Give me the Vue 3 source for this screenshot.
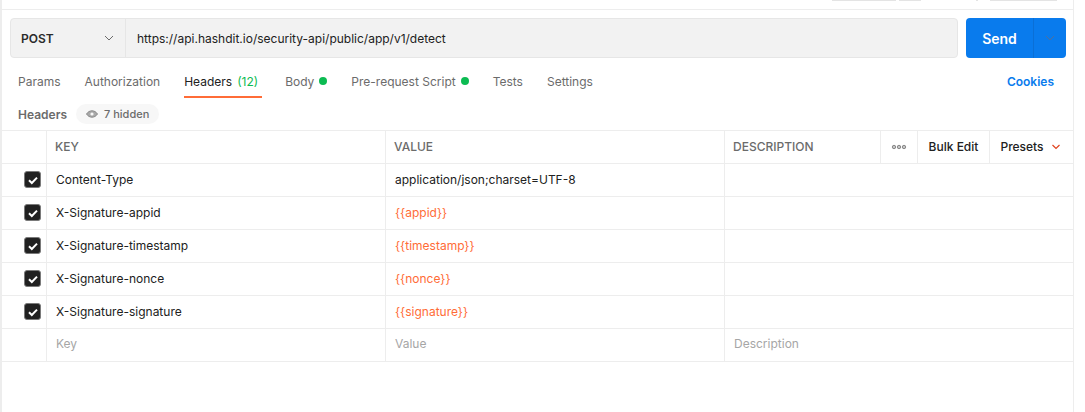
<template>
  <div class="page">
    <div class="top-strip">
      <span class="stub stub-a"></span>
      <span class="stub stub-b"></span>
      <span class="stub stub-d"></span>
      <span class="stub stub-c"></span>
    </div>

    <div class="request-bar">
      <div class="url-box">
        <div class="method">
          <span>POST</span>
          <svg class="chev" width="12" height="12" viewBox="0 0 12 12"><path d="M2 4l4 4 4-4" fill="none" stroke="#6b6b6b" stroke-width="1"/></svg>
        </div>
        <div class="url">https://api.hashdit.io/security-api/public/app/v1/detect</div>
      </div>
      <div class="send">
        <span class="send-label">Send</span>
        <span class="send-more">
          <svg width="12" height="12" viewBox="0 0 12 12"><path d="M2 4l4 4 4-4" fill="none" stroke="#4f6f9c" stroke-width="1"/></svg>
        </span>
      </div>
    </div>

    <div class="tabs">
      <div class="tab-list">
        <span v-for="tab in tabs" :key="tab.name" class="tab" :class="{ active: tab.active }">
          {{ tab.name }}
          <span v-if="tab.count" class="count">{{ tab.count }}</span>
          <span v-if="tab.dot" class="dot"></span>
        </span>
      </div>
      <span class="cookies">Cookies</span>
    </div>

    <div class="sub-head">
      <span class="sub-title">Headers</span>
      <span class="hidden-pill">
        <svg width="14" height="14" viewBox="0 0 14 14">
          <path d="M1.5 7C3 4.8 4.9 3.8 7 3.8S11 4.8 12.5 7C11 9.2 9.1 10.2 7 10.2S3 9.2 1.5 7z" fill="#a8a8a8" stroke="#8a8a8a" stroke-width="1"/>
          <circle cx="7" cy="7" r="1.6" fill="#f7f7f7"/>
        </svg>
        7 hidden
      </span>
    </div>

    <div class="table">
      <div class="row head">
        <div class="cell check-cell"></div>
        <div class="cell">KEY</div>
        <div class="cell">VALUE</div>
        <div class="cell desc-head">
          <span class="desc-label">DESCRIPTION</span>
          <span class="tool more">
            <svg width="16" height="6" viewBox="0 0 16 6">
              <circle cx="3" cy="3" r="1.7" fill="#c4c4c4" stroke="#8a8a8a"/>
              <circle cx="8" cy="3" r="1.7" fill="#c4c4c4" stroke="#8a8a8a"/>
              <circle cx="13" cy="3" r="1.7" fill="#c4c4c4" stroke="#8a8a8a"/>
            </svg>
          </span>
          <span class="tool bulk">Bulk Edit</span>
          <span class="tool presets">
            Presets
            <svg width="10" height="10" viewBox="0 0 10 10"><path d="M1.5 3l3.5 3.5L8.500 3" fill="none" stroke="#e0431f" stroke-width="1.2"/></svg>
          </span>
        </div>
      </div>

      <div v-for="h in headers" :key="h.key" class="row">
        <div class="cell check-cell">
          <span class="checkbox">
            <svg width="12" height="12" viewBox="0 0 12 12"><path d="M2 6.3l2.8 2.7L10 3.6" fill="none" stroke="#fff" stroke-width="2"/></svg>
          </span>
        </div>
        <div class="cell body-cell">{{ h.key }}</div>
        <div class="cell body-cell" :class="{ variable: h.variable }">{{ h.value }}</div>
        <div class="cell"></div>
      </div>

      <div class="row placeholder">
        <div class="cell check-cell"></div>
        <div class="cell body-cell">Key</div>
        <div class="cell body-cell">Value</div>
        <div class="cell body-cell">Description</div>
      </div>
    </div>
  </div>
</template>

<script setup>
const tabs = [
  { name: 'Params' },
  { name: 'Authorization' },
  { name: 'Headers', count: '(12)', active: true },
  { name: 'Body', dot: true },
  { name: 'Pre-request Script', dot: true },
  { name: 'Tests' },
  { name: 'Settings' }
]

const headers = [
  { key: 'Content-Type', value: 'application/json;charset=UTF-8' },
  { key: 'X-Signature-appid', value: '{{appid}}', variable: true },
  { key: 'X-Signature-timestamp', value: '{{timestamp}}', variable: true },
  { key: 'X-Signature-nonce', value: '{{nonce}}', variable: true },
  { key: 'X-Signature-signature', value: '{{signature}}', variable: true }
]
</script>

<style>
html,
body {
  margin: 0;
  background: #fff;
  overflow: hidden;
}
</style>

<style scoped>
.page {
  box-sizing: border-box;
  width: 1074px;
  height: 412px;
  border-left: 2px solid #ededed;
  border-right: 1px solid #ededed;
  font-family: Inter, "Liberation Sans", sans-serif;
  font-size: 12px;
  color: #212121;
}

.top-strip {
  height: 9px;
  border-bottom: 1px solid #ededed;
  display: flex;
  justify-content: flex-end;
  align-items: flex-start;
  padding-right: 16px;
}

.stub {
  height: 1px;
  background: #e4e4e4;
}

.stub-a {
  width: 64px;
}

.stub-b {
  width: 22px;
  margin-left: 3px;
}

.stub-d {
  width: 2px;
  margin-left: 55px;
}

.stub-c {
  width: 67px;
  margin-left: 12px;
}

.request-bar {
  display: flex;
  gap: 8px;
  padding: 8px 7px 0 8px;
}

.url-box {
  box-sizing: border-box;
  flex: 1;
  height: 40px;
  display: flex;
  background: #f2f2f2;
  border: 1px solid #e6e6e6;
  border-radius: 4px;
}

.method {
  box-sizing: border-box;
  width: 115px;
  display: flex;
  align-items: center;
  justify-content: space-between;
  padding: 0 10px;
  border-right: 1px solid #e6e6e6;
  font-weight: 600;
  font-size: 12px;
  color: #2b2b2b;
}

.url {
  display: flex;
  align-items: center;
  padding-left: 11px;
  font-size: 12px;
}

.send {
  width: 100px;
  height: 40px;
  display: flex;
  background: #097bed;
  border-radius: 4px;
  color: #fff;
  font-weight: 600;
  font-size: 14px;
}

.send-label {
  width: 67px;
  display: flex;
  align-items: center;
  justify-content: center;
}

.send-more {
  flex: 1;
  display: flex;
  align-items: center;
  justify-content: center;
  border-left: 1px solid #0a6fd6;
}

.tabs {
  box-sizing: border-box;
  height: 40px;
  display: flex;
  align-items: center;
  justify-content: space-between;
  padding: 8px 19px 0 16px;
}

.tab-list {
  display: flex;
  gap: 24px;
  height: 100%;
  align-items: center;
}

.tab {
  box-sizing: border-box;
  position: relative;
  display: flex;
  align-items: center;
  gap: 5px;
  height: 100%;
  padding-bottom: 2px;
  color: #6b6b6b;
}

.tab.active {
  color: #212121;
  padding-right: 4px;
  margin-right: -1px;
}

.tab.active::after {
  content: "";
  position: absolute;
  left: 0;
  right: 0;
  bottom: 0;
  height: 2px;
  background: #ff6c37;
}

.count {
  color: #0cbb52;
}

.dot {
  width: 8px;
  height: 8px;
  border-radius: 50%;
  background: #0cbb52;
}

.cookies {
  color: #097bed;
  font-weight: 600;
  padding-bottom: 2px;
}

.sub-head {
  height: 32px;
  display: flex;
  align-items: center;
  gap: 9px;
  padding-left: 16px;
}

.sub-title {
  color: #6b6b6b;
  font-weight: 600;
  font-size: 12px;
}

.hidden-pill {
  height: 20px;
  display: flex;
  align-items: center;
  gap: 5px;
  padding: 0 10px 0 9px;
  background: #f7f7f7;
  border-radius: 10px;
  color: #6b6b6b;
  font-size: 11px;
  font-weight: 500;
}

.table {
  border-top: 1px solid #ededed;
}

.row {
  box-sizing: border-box;
  height: 33px;
  display: grid;
  grid-template-columns: 45px 339px 339px 1fr;
  border-bottom: 1px solid #ededed;
}

.cell {
  min-width: 0;
  display: flex;
  align-items: center;
  padding-left: 9px;
  border-right: 1px solid #ededed;
}

.cell:last-child {
  border-right: none;
}

.head {
  font-size: 12px;
  font-weight: 500;
  color: #6b6b6b;
}

.head .cell {
  padding-left: 8px;
  padding-bottom: 1px;
}

.head .desc-head {
  padding: 0;
}

.check-cell {
  padding-left: 0;
  justify-content: flex-end;
  padding-right: 5px;
  padding-bottom: 1px;
}

.head .check-cell {
  padding: 0;
}

.checkbox {
  width: 17px;
  height: 17px;
  display: flex;
  align-items: center;
  justify-content: center;
  background: #212121;
  border: 1px solid #7a7a7a;
  border-radius: 3px;
  box-sizing: border-box;
}

.body-cell {
  font-size: 12px;
  color: #212121;
  padding-bottom: 2px;
}

.variable {
  color: #ff6c37;
}

.placeholder .body-cell {
  color: #a6a6a6;
  padding-bottom: 4px;
}

.desc-label {
  flex: 1;
  padding-left: 8px;
  padding-bottom: 1px;
}

.tool {
  box-sizing: border-box;
  height: 100%;
  display: flex;
  align-items: center;
  justify-content: center;
  border-left: 1px solid #ededed;
  padding-bottom: 1px;
  color: #212121;
  font-weight: 500;
}

.more {
  width: 37px;
}

.bulk {
  width: 72px;
}

.presets {
  width: 84px;
  gap: 7px;
  padding-right: 2px;
}
</style>
